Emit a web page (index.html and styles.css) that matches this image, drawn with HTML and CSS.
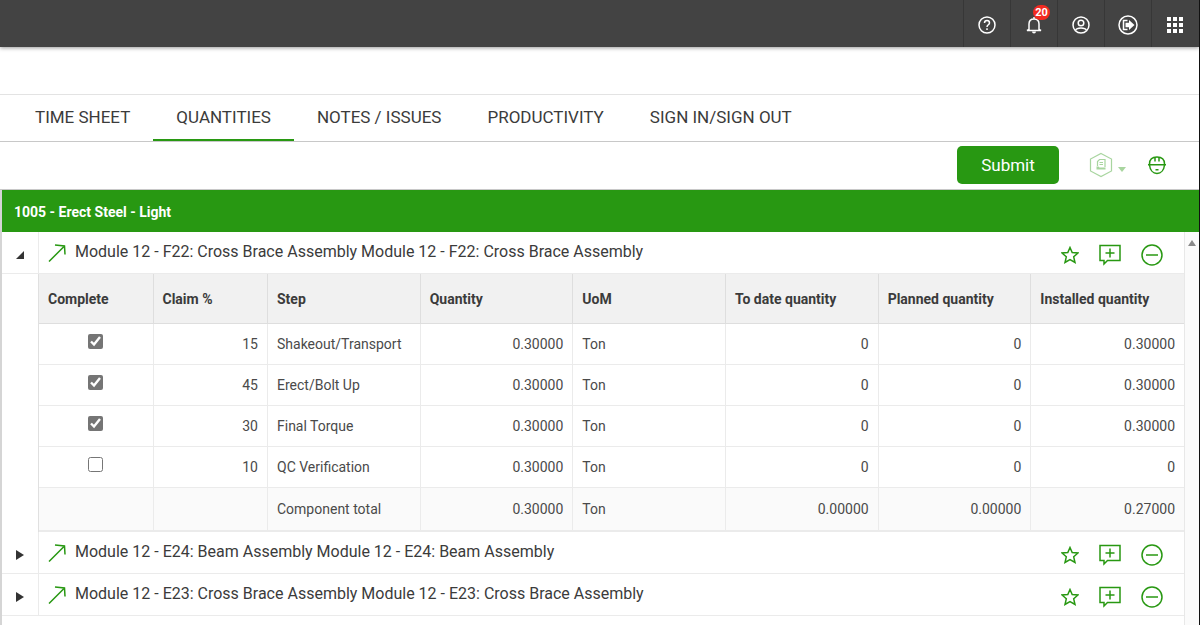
FILE: index.html
```
<!DOCTYPE html>
<html lang="en">
<head>
  <meta charset="UTF-8">
  <title>Quantities</title>
  <link rel="stylesheet" href="styles.css">
</head>
<body>

  <!-- Shared icons -->
  <svg class="sprite" aria-hidden="true">
    <symbol id="arrow" viewBox="0 0 18 18"><path d="M1 17.500 16.500 2M7 1l9.500 1 .5 8.500"/></symbol>
    <symbol id="star" viewBox="0 0 18 18"><path d="M9 1.500l2.200 5 5.800.5-4.300 3.800 1.300 5.700L9 13.600l-5 2.900 1.300-5.700L1 7l5.800-.5z"/></symbol>
    <symbol id="comment" viewBox="0 0 22 22"><path d="M1 1.500h20v15H8.500l-3.500 3.500v-3.500H1zM11 4.500v9M6.500 9h9"/></symbol>
    <symbol id="minus" viewBox="0 0 22 22"><circle cx="11" cy="11" r="10"/><path d="M5 11h12"/></symbol>
  </svg>

  <header class="topbar">
    <button type="button" aria-label="Help">
      <svg viewBox="0 0 20 20"><circle cx="10" cy="10" r="8"/><path d="M7.500 8c0-3.400 5-3.400 5 0 0 1.800-2.500 1.800-2.500 4"/><path d="M10 13.300v1.700"/></svg>
    </button>
    <button type="button" aria-label="Notifications">
      <svg viewBox="0 0 20 20"><path d="M5 14.500V9c0-3 2-5 5-5s5 2 5 5v5.500l2 1H3zM10 4V2"/><path class="solid" d="M8 16.500h4a2 2 0 0 1-4 0z"/></svg>
      <span class="badge">20</span>
    </button>
    <button type="button" aria-label="Account">
      <svg viewBox="0 0 20 20"><circle cx="10" cy="10" r="8"/><circle cx="10" cy="8" r="2.800"/><path d="M4.500 15.500c1.500-3.200 9.500-3.200 11 0"/></svg>
    </button>
    <button type="button" aria-label="Sign out">
      <svg viewBox="0 0 20 20"><circle cx="10" cy="10" r="9"/><path d="M9.500 5.500H5.500v9h4"/><path class="solid" d="M7.500 7.800H11V5l5.500 5-5.500 5v-2.800H7.500z"/></svg>
    </button>
    <button type="button" aria-label="Apps">
      <svg viewBox="0 0 20 20"><path class="solid" d="M2 2h4v4H2zM8 2h4v4H8zM14 2h4v4h-4zM2 8h4v4H2zM8 8h4v4H8zM14 8h4v4h-4zM2 14h4v4H2zM8 14h4v4H8zM14 14h4v4h-4z"/></svg>
    </button>
  </header>

  <nav class="tabs">
    <a href="#timesheet">TIME SHEET</a>
    <a href="#quantities" class="active">QUANTITIES</a>
    <a href="#notes">NOTES / ISSUES</a>
    <a href="#productivity">PRODUCTIVITY</a>
    <a href="#sign">SIGN IN/SIGN OUT</a>
  </nav>

  <div class="toolbar">
    <button type="button" class="submit">Submit</button>
    <button type="button" class="export" aria-label="Reports" disabled>
      <svg class="hex" viewBox="0 0 24 26"><path d="M12 1.500l10.500 5.500v12L12 24.500 1.500 19V7z"/><path d="M8.500 14V9.500l2-2h5.500V15M10.500 10.500h3.500M10.500 12.500h3.500"/><path class="solid" d="M7.500 14.500h2l1 1h6v2h-9z"/></svg>
      <svg class="caret" viewBox="0 0 8 5"><path d="M0 0h8L4 5z"/></svg>
    </button>
    <button type="button" class="crew" aria-label="Crew">
      <svg viewBox="0 0 20 20"><path d="M2.500 9C2.500 4.500 5.500 2 10 2s7.500 2.500 7.500 7M1 9.800h18M8 2v4.500M12 2v4.500M2.500 10c.5 5 3.500 8.500 7.500 8.500s7-3.500 7.500-8.500M8.500 14.800h3"/></svg>
    </button>
  </div>

  <main class="panel">
    <h1>1005 - Erect Steel - Light</h1>
    <div class="scroll">
      <div class="groups">

        <section class="group">
          <div class="group-row">
            <button type="button" class="toggle open" aria-label="Collapse"><svg viewBox="0 0 8 8"><path d="M8 0v8H0z"/></svg></button>
            <div class="title"><svg><use href="#arrow"/></svg><span>Module 12 - F22: Cross Brace Assembly Module 12 - F22: Cross Brace Assembly</span></div>
            <div class="actions">
              <button type="button" aria-label="Favorite"><svg class="star"><use href="#star"/></svg></button>
              <button type="button" aria-label="Add comment"><svg class="comment"><use href="#comment"/></svg></button>
              <button type="button" aria-label="Remove"><svg class="minus"><use href="#minus"/></svg></button>
            </div>
          </div>
          <div class="detail">
            <table>
              <colgroup><col class="narrow"><col class="narrow"><col><col><col><col><col><col></colgroup>
              <thead>
                <tr><th>Complete</th><th>Claim %</th><th>Step</th><th>Quantity</th><th>UoM</th><th>To date quantity</th><th>Planned quantity</th><th>Installed quantity</th></tr>
              </thead>
              <tbody>
                <tr><td class="check"><input type="checkbox" aria-label="Shakeout/Transport complete" checked></td><td class="num">15</td><td>Shakeout/Transport</td><td class="num">0.30000</td><td>Ton</td><td class="num">0</td><td class="num">0</td><td class="num">0.30000</td></tr>
                <tr><td class="check"><input type="checkbox" aria-label="Erect/Bolt Up complete" checked></td><td class="num">45</td><td>Erect/Bolt Up</td><td class="num">0.30000</td><td>Ton</td><td class="num">0</td><td class="num">0</td><td class="num">0.30000</td></tr>
                <tr><td class="check"><input type="checkbox" aria-label="Final Torque complete" checked></td><td class="num">30</td><td>Final Torque</td><td class="num">0.30000</td><td>Ton</td><td class="num">0</td><td class="num">0</td><td class="num">0.30000</td></tr>
                <tr><td class="check"><input type="checkbox" aria-label="QC Verification complete"></td><td class="num">10</td><td>QC Verification</td><td class="num">0.30000</td><td>Ton</td><td class="num">0</td><td class="num">0</td><td class="num">0</td></tr>
              </tbody>
              <tfoot>
                <tr><td></td><td></td><td>Component total</td><td class="num">0.30000</td><td>Ton</td><td class="num">0.00000</td><td class="num">0.00000</td><td class="num">0.27000</td></tr>
              </tfoot>
            </table>
          </div>
        </section>

        <section class="group">
          <div class="group-row">
            <button type="button" class="toggle" aria-label="Expand"><svg viewBox="0 0 8 10"><path d="M0 0l8 5-8 5z"/></svg></button>
            <div class="title"><svg><use href="#arrow"/></svg><span>Module 12 - E24: Beam Assembly Module 12 - E24: Beam Assembly</span></div>
            <div class="actions">
              <button type="button" aria-label="Favorite"><svg class="star"><use href="#star"/></svg></button>
              <button type="button" aria-label="Add comment"><svg class="comment"><use href="#comment"/></svg></button>
              <button type="button" aria-label="Remove"><svg class="minus"><use href="#minus"/></svg></button>
            </div>
          </div>
        </section>

        <section class="group">
          <div class="group-row">
            <button type="button" class="toggle" aria-label="Expand"><svg viewBox="0 0 8 10"><path d="M0 0l8 5-8 5z"/></svg></button>
            <div class="title"><svg><use href="#arrow"/></svg><span>Module 12 - E23: Cross Brace Assembly Module 12 - E23: Cross Brace Assembly</span></div>
            <div class="actions">
              <button type="button" aria-label="Favorite"><svg class="star"><use href="#star"/></svg></button>
              <button type="button" aria-label="Add comment"><svg class="comment"><use href="#comment"/></svg></button>
              <button type="button" aria-label="Remove"><svg class="minus"><use href="#minus"/></svg></button>
            </div>
          </div>
        </section>

      </div>
      <div class="scrollbar"><svg viewBox="0 0 8 6"><path d="M4 0l4 6H0z"/></svg></div>
    </div>
  </main>

</body>
</html>
```
FILE: styles.css
```
* { box-sizing: border-box; }
body {
  margin: 0; min-height: 100vh; display: flex; flex-direction: column;
  font-family: Roboto, "Liberation Sans", sans-serif; font-size: 14px; color: #3b3b3b;
  background: white; border-right: 1px solid #111;
}
button { padding: 0; border: none; background: none; font: inherit; cursor: pointer; }
svg { display: block; fill: none; stroke: #289812; stroke-width: 1.5; }
.sprite { width: 0; height: 0; position: absolute; }

.topbar { display: flex; justify-content: flex-end; height: 47px; padding-right: 1px; background: #434343; box-shadow: 0 1px 4px rgba(0,0,0,0.4); }
.topbar button { position: relative; width: 47px; border-left: 1px solid #373737; display: flex; align-items: center; justify-content: center; padding-top: 2px; }
.topbar svg { width: 20px; height: 20px; stroke: white; }
.topbar .solid { fill: white; stroke: none; }
.badge { position: absolute; top: 5px; right: 7px; width: 17px; height: 15px; border-radius: 8px; background: #f32a20; color: white; font-size: 11px; line-height: 15px; font-weight: 700; text-align: center; }

.tabs { display: flex; margin-top: 47px; padding-left: 12px; border-top: 1px solid #e3e3e3; border-bottom: 1px solid #c8c8c8; }
.tabs a { padding: 0 23px; height: 46px; line-height: 44px; font-size: 17px; color: #3b3b3b; text-decoration: none; border-bottom: 2px solid transparent; }
.tabs .active { border-bottom-color: #289812; }

.toolbar { display: flex; align-items: center; justify-content: flex-end; height: 48px; padding: 0 32px 2px 0; border-bottom: 1px solid #c8c8c8; }
.submit { width: 102px; height: 38px; border-radius: 5px; background: #289812; color: white; font-size: 17px; }
.export { display: flex; align-items: center; gap: 5px; margin-left: 30px; opacity: 0.4; }
.export .hex { width: 24px; height: 26px; stroke-width: 1.2; }
.export .solid { fill: #289812; stroke: none; }
.caret { width: 8px; height: 5px; fill: #289812; stroke: none; margin-top: 10px; }
.crew { margin-left: 21px; }
.crew svg { width: 20px; height: 20px; }

.panel { flex: 1; display: flex; flex-direction: column; border-left: 2px solid #d5d5d5; }
h1 { margin: 0; padding-left: 12px; height: 42px; line-height: 44px; background: #289812; color: white; font-size: 14px; font-weight: 700; }
.scroll { flex: 1; display: flex; }
.groups { flex: 1; border-right: 1px solid #e8e8e8; }
.scrollbar { width: 14px; padding: 8px 3px; background: #fbfbfb; }
.scrollbar svg { width: 8px; height: 6px; fill: #8a8a8a; stroke: none; }

.group-row { display: flex; height: 42px; border-bottom: 1px solid #ebebeb; }
.toggle { width: 37px; border-right: 1px solid #ebebeb; display: flex; align-items: center; justify-content: center; padding-top: 4px; }
.toggle svg { width: 8px; height: 10px; fill: #333; stroke: none; }
.toggle.open svg { height: 8px; }
.title { flex: 1; display: flex; align-items: center; gap: 9px; padding-left: 9px; font-size: 16px; }
.title svg { width: 18px; height: 18px; }
.title span { padding-bottom: 3px; }
.actions { display: flex; align-items: center; padding: 4px 21px 0 0; gap: 20px; }
.star { width: 18px; height: 18px; }
.comment { width: 22px; height: 22px; }
.minus { width: 22px; height: 22px; }

.detail { padding-left: 36px; }
table { width: 100%; table-layout: fixed; border-collapse: separate; border-spacing: 0; border-left: 1px solid #e0e0e0; }
.narrow { width: 10%; }
th, td { padding: 0 9px; text-align: left; border-right: 1px solid #ebebeb; border-bottom: 1px solid #ebebeb; }
th:last-child, td:last-child { border-right: none; }
th { height: 50px; background: #f1f1f1; border-color: #dedede; font-size: 14px; font-weight: 700; }
td { height: 41px; color: #4a4a4a; }
.num { text-align: right; }
.check { text-align: center; padding-bottom: 6px; }
.check input { width: 15px; height: 15px; margin: 0; accent-color: #757575; vertical-align: middle; }
tfoot td { height: 44px; background: #fafafa; border-bottom-width: 2px; }
```
